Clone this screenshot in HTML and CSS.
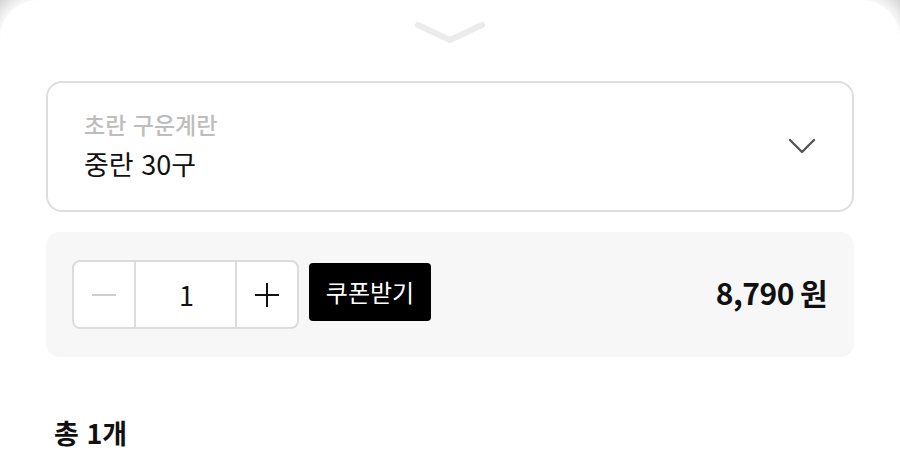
FILE: index.html
```html
<!DOCTYPE html>
<html lang="ko">
<head>
<meta charset="utf-8">
<link rel="stylesheet" href="styles.css">
</head>
<body>
<div class="sheet">
  <div class="handle">
    <svg width="70" height="22" viewBox="0 0 70 22"><path d="M3 3 L35 18 L67 3" fill="none" stroke="#ebebeb" stroke-width="6" stroke-linecap="round" stroke-linejoin="round"/></svg>
  </div>
  <div class="select">
    <div class="select-text">
      <div class="select-label">초란 구운계란</div>
      <div class="select-value">중란 30구</div>
    </div>
    <svg class="select-arrow" width="28" height="18" viewBox="0 0 28 18"><path d="M2 3 L14 15 L26 3" fill="none" stroke="#555" stroke-width="2.4" stroke-linecap="round" stroke-linejoin="round"/></svg>
  </div>
  <div class="option">
    <div class="stepper">
      <div class="step-btn">
        <svg width="26" height="26" viewBox="0 0 26 26"><path d="M1 13 H25" stroke="#cfcfcf" stroke-width="2"/></svg>
      </div>
      <div class="step-num">1</div>
      <div class="step-btn plus">
        <svg width="26" height="26" viewBox="0 0 26 26"><path d="M1 13 H25 M13 1 V25" stroke="#111" stroke-width="2"/></svg>
      </div>
    </div>
    <div class="coupon">쿠폰받기</div>
    <div class="price">8,790<span class="won">원</span></div>
  </div>
  <div class="total">총 1개</div>
</div>
</body>
</html>
```
FILE: styles.css
```css
html, body {
  margin: 0;
  padding: 0;
  height: 100%;
}
body {
  background: #c9c9c9;
  font-family: "Noto Sans CJK KR", "Noto Sans", sans-serif;
  overflow: hidden;
}
.sheet {
  background: #fff;
  border-radius: 38px 38px 0 0;
  box-shadow: 0 0 18px 10px #fff;
  min-height: 100%;
  box-sizing: border-box;
  padding: 22px 46px 0 46px;
}
.handle {
  display: flex;
  justify-content: center;
  height: 20px;
}
.handle svg {
  display: block;
}
.select {
  margin-top: 39px;
  height: 131px;
  box-sizing: border-box;
  border: 2px solid #dedede;
  border-radius: 16px;
  display: flex;
  align-items: center;
  justify-content: space-between;
  padding: 0 36px 0 36px;
}
.select-text {
  display: flex;
  flex-direction: column;
  margin-top: -2px;
}
.select-label {
  color: #bdbdbd;
  font-size: 23px;
  font-weight: 500;
  line-height: 28px;
}
.select-value {
  color: #111;
  font-size: 27px;
  line-height: 36px;
  margin-top: 8px;
}
.select-arrow {
  display: block;
  margin-top: -2px;
}
.option {
  margin-top: 20px;
  height: 125px;
  background: #f7f7f7;
  border-radius: 14px;
  display: flex;
  align-items: center;
  padding: 0 27px 0 26px;
}
.stepper {
  display: flex;
  width: 227px;
  height: 69px;
  box-sizing: border-box;
  border: 2px solid #dcdcdc;
  border-radius: 8px;
  background: #fff;
  overflow: hidden;
}
.step-btn {
  width: 60px;
  display: flex;
  align-items: center;
  justify-content: center;
}
.step-btn svg {
  display: block;
}
.step-num {
  flex: 1;
  border-left: 2px solid #dcdcdc;
  border-right: 2px solid #dcdcdc;
  display: flex;
  align-items: center;
  justify-content: center;
  font-size: 27px;
  color: #111;
  padding-left: 2px;
}
.coupon {
  margin-left: 10px;
  width: 122px;
  height: 58px;
  background: #000;
  color: #fff;
  border-radius: 4px;
  display: flex;
  align-items: center;
  justify-content: center;
  font-size: 24px;
  font-weight: 400;
  margin-top: -6px;
}
.price {
  margin-left: auto;
  font-size: 30px;
  font-weight: 700;
  color: #111;
  letter-spacing: -0.5px;
  margin-top: -6px;
}
.won {
  margin-left: 6px;
}
.total {
  margin-top: 56px;
  margin-left: 8px;
  font-size: 27px;
  font-weight: 700;
  color: #111;
}
```
